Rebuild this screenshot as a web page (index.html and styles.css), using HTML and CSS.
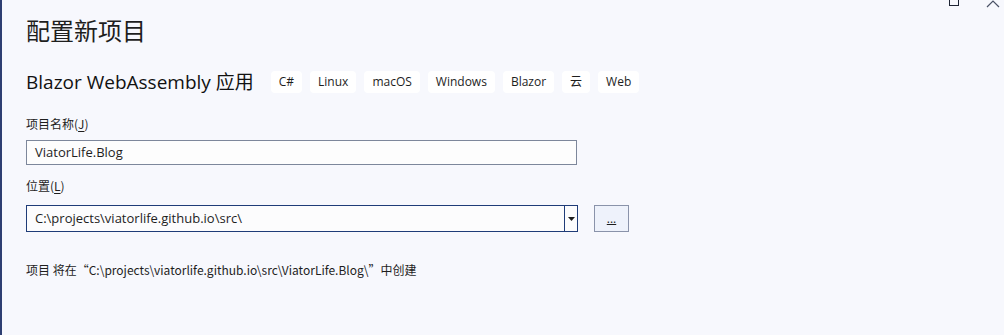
FILE: index.html
```html
<!DOCTYPE html>
<html lang="zh">
<head>
<meta charset="utf-8">
<link rel="stylesheet" href="styles.css">
</head>
<body>
<div class="window">
  <div class="winctl">
    <svg class="max" width="12" height="8" viewBox="0 0 12 8"><rect x="1.5" y="-4" width="9" height="9.5" fill="none" stroke="#1e2433" stroke-width="1"/></svg>
    <svg class="close" width="14" height="8" viewBox="0 0 14 8"><path d="M1 7 L7 1 L13 7" fill="none" stroke="#4a5266" stroke-width="1.2"/></svg>
  </div>
  <main class="page">
    <h1 class="title">配置新项目</h1>
    <div class="subhead">
      <h2 class="tpl">Blazor WebAssembly 应用</h2>
      <ul class="tags">
        <li>C#</li><li>Linux</li><li>macOS</li><li>Windows</li><li>Blazor</li><li>云</li><li>Web</li>
      </ul>
    </div>
    <label class="lbl">项目名称(<u>J</u>)</label>
    <div class="field">ViatorLife.Blog</div>
    <label class="lbl lbl2">位置(<u>L</u>)</label>
    <div class="row">
      <div class="combo">
        <span class="combo-text">C:\projects\viatorlife.github.io\src\</span>
        <span class="combo-btn"><svg width="7" height="4" viewBox="0 0 7 4"><path d="M0 0 H7 L3.5 4 Z" fill="#1e1e1e"/></svg></span>
      </div>
      <button class="browse"><span>...</span></button>
    </div>
    <p class="note">项目 将在“C:\projects\viatorlife.github.io\src\ViatorLife.Blog\”中创建</p>
  </main>
</div>
</body>
</html>
```
FILE: styles.css
```css
html, body { margin: 0; padding: 0; }
body {
  width: 1004px;
  height: 335px;
  overflow: hidden;
  background: #f7f8fd;
  font-family: "Open Sans", "Noto Sans CJK SC", sans-serif;
  color: #1e1e1e;
}
.window {
  position: relative;
  height: 335px;
  border-left: 2px solid #2e3f72;
  box-sizing: border-box;
}
.winctl {
  position: absolute;
  top: 0;
  right: 0;
  display: flex;
  gap: 26px;
  padding-right: 4px;
}
.winctl svg { display: block; }
.page {
  padding: 13px 0 0 24px;
}
.title {
  margin: 0;
  font-family: "Noto Sans CJK SC", sans-serif;
  font-weight: 400;
  font-size: 24px;
  line-height: 34px;
  color: #1e1e1e;
}
.subhead {
  display: flex;
  align-items: center;
  margin-top: 23px;
  height: 24px;
}
.tpl {
  margin: 0;
  font-weight: 400;
  font-size: 19px;
  line-height: 24px;
  font-family: "Open Sans", "Noto Sans CJK SC", sans-serif;
  color: #111;
}
.tags {
  display: flex;
  gap: 8px;
  list-style: none;
  margin: 0 0 0 17px;
  padding: 0;
}
.tags li {
  background: #ffffff;
  border-radius: 4px;
  height: 22px;
  line-height: 22px;
  padding: 0 8px;
  font-size: 12px;
  color: #1e1e1e;
}
.lbl {
  display: block;
  margin-top: 21px;
  font-family: "Noto Sans CJK SC", sans-serif;
  font-size: 12px;
  line-height: 18px;
  color: #1e1e1e;
}
.lbl u { text-decoration: underline; text-underline-offset: 2px; }
.lbl2 { margin-top: 12px; }
.field {
  margin-top: 7px;
  width: 551px;
  height: 25px;
  box-sizing: border-box;
  border: 1px solid #7d879b;
  background: #fdfdfd;
  padding-left: 8px;
  font-size: 13px;
  line-height: 23px;
  color: #1e1e1e;
}
.row {
  display: flex;
  align-items: flex-start;
  gap: 16px;
  margin-top: 10px;
}
.combo {
  display: flex;
  width: 552px;
  height: 27px;
  box-sizing: border-box;
  border: 1px solid #1f3c78;
  background: #fcfcfd;
}
.combo-text {
  flex: 1;
  padding-left: 8px;
  font-size: 13px;
  line-height: 25px;
}
.combo-btn {
  width: 12px;
  border-left: 1px solid #1f3c78;
  display: flex;
  align-items: center;
  justify-content: center;
}
.browse {
  width: 35px;
  height: 27px;
  box-sizing: border-box;
  border: 1px solid #8a93aa;
  background: #eef2fb;
  padding: 0;
  font-family: "Open Sans", sans-serif;
  font-size: 12px;
  color: #1e1e1e;
  display: flex;
  align-items: center;
  justify-content: center;
}
.browse span { text-decoration: underline; line-height: 12px; }
.note {
  margin: 29px 0 0;
  font-family: "Noto Sans CJK SC", sans-serif;
  font-size: 12px;
  line-height: 18px;
  color: #1e1e1e;
}
```
